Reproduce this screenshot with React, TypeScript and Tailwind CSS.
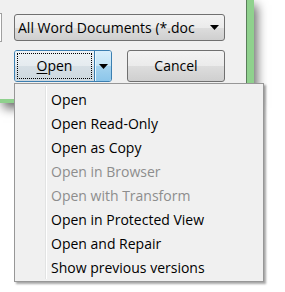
import React from "react";

const font = { fontFamily: '"Open Sans", "Noto Sans", sans-serif' };

function Arrow() {
  return (
    <svg width="9" height="5" viewBox="0 0 9 5">
      <path d="M0 0 H9 L4.5 5 Z" fill="#000" />
    </svg>
  );
}

const items: { label: string; disabled?: boolean }[] = [
  { label: "Open" },
  { label: "Open Read-Only" },
  { label: "Open as Copy" },
  { label: "Open in Browser", disabled: true },
  { label: "Open with Transform", disabled: true },
  { label: "Open in Protected View" },
  { label: "Open and Repair" },
  { label: "Show previous versions" },
];

export default function App() {
  return (
    <div
      className="relative w-[285px] h-[292px] bg-white overflow-hidden text-[14px] text-black"
      style={font}
    >
      {/* dialog */}
      <div className="w-[254px] h-[103px] bg-[#f0f0f0] border-r-[8px] border-b-[4px] border-[#8fd18d] shadow-[3px_5px_10px_rgba(0,0,0,0.6)] relative">
        <div className="absolute right-[-1px] top-0 bottom-[-4px] w-px bg-[#5a7d5a]" />
        <div className="flex flex-col pt-[14px]">
          <div className="flex items-start">
            <div className="w-[2px] h-[29px] mt-[-1px] bg-white border-r border-y border-[#a0a0a0]" />
            <div className="ml-[12px] w-[211px] h-[27px] rounded-[3px] border border-[#707070] bg-[linear-gradient(#f3f3f3,#ebebeb_50%,#dddddd_51%,#cfcfcf)] flex items-center pl-[3px] pr-[5px]">
              <span className="flex-1 overflow-hidden whitespace-nowrap leading-none">
                All Word Documents (*.doc
              </span>
              <span className="ml-[4px] flex items-center">
                <Arrow />
              </span>
            </div>
          </div>
          <div className="flex mt-[8px] ml-[14px] gap-[15px]">
            <div className="w-[98px] h-[32px] rounded-[3px] border border-[#3c7fb1] flex overflow-hidden">
              <div className="flex-1 flex items-center justify-center bg-[linear-gradient(#edf2f5,#e5ebef_50%,#d6dfe5_51%,#cdd8df)] p-[2px]">
                <div className="w-full h-full border border-dotted border-black flex items-center justify-center">
                  <span className="leading-none">
                    <span className="underline underline-offset-[2px]">O</span>pen
                  </span>
                </div>
              </div>
              <div className="w-px bg-[#3c7fb1]" />
              <div className="w-[16px] flex items-center justify-center bg-[linear-gradient(#d9effc,#c2e4f6_50%,#a4d3ef_51%,#8cc6ea)] border-l border-[#e8f5fc]">
                <Arrow />
              </div>
            </div>
            <div className="w-[98px] h-[32px] rounded-[3px] border border-[#707070] bg-[linear-gradient(#f3f3f3,#ebebeb_50%,#dddddd_51%,#cfcfcf)] flex items-center justify-center">
              <span className="leading-none">Cancel</span>
            </div>
          </div>
        </div>
      </div>

      {/* menu */}
      <div className="absolute left-[14px] top-[83px] w-[250px] h-[199px] bg-[#f0f0f0] border border-[#979797] shadow-[2px_2px_2px_rgba(0,0,0,0.35)] py-[3px] pl-[2px] pr-[2px]">
        <div className="absolute left-[30px] top-[2px] bottom-[2px] w-px bg-[#e2e3e3]" />
        <div className="absolute left-[31px] top-[2px] bottom-[2px] w-px bg-white" />
        <div className="flex flex-col">
          {items.map((it) => (
            <div
              key={it.label}
              className={`h-[24px] flex items-center pl-[34px] whitespace-nowrap ${
                it.disabled ? "text-[#8d8d8d]" : "text-black"
              }`}
            >
              {it.label}
            </div>
          ))}
        </div>
      </div>
    </div>
  );
}
